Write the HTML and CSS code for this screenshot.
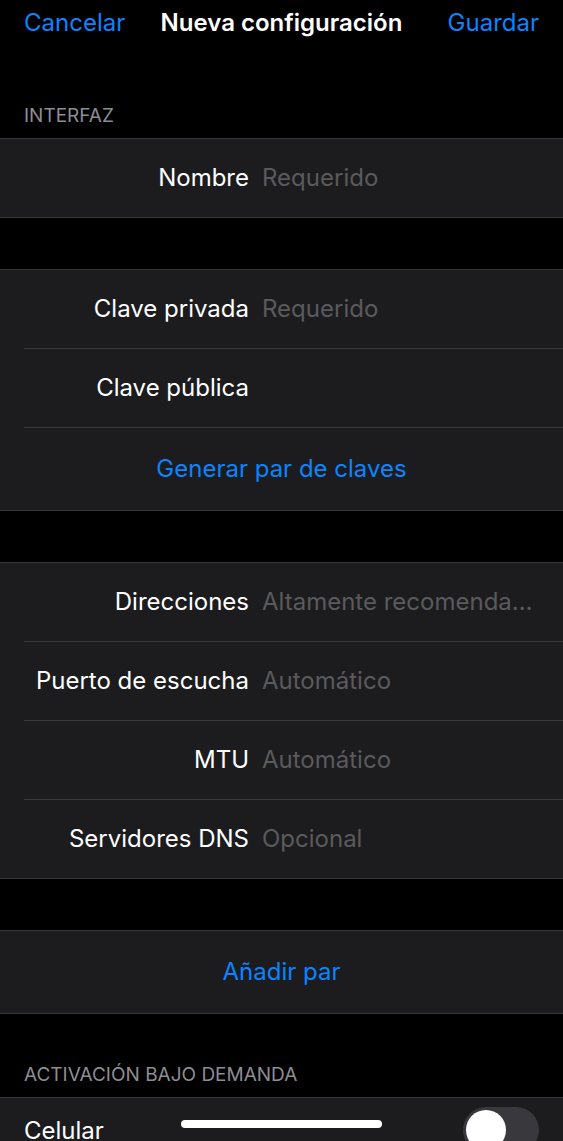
FILE: index.html
```html
<!DOCTYPE html>
<html lang="es">
<head>
	<meta charset="utf-8" />
	<title>Nueva configuración</title>
	<link rel="stylesheet" href="styles.css">
</head>
<body>
	<div class="screen">
		<header class="navbar">
			<span class="nav-button nav-left">Cancelar</span>
			<span class="nav-title">Nueva configuración</span>
			<span class="nav-button nav-right">Guardar</span>
		</header>

		<div class="section-header first">INTERFAZ</div>
		<div class="group">
			<div class="row field">
				<span class="label">Nombre</span>
				<span class="value placeholder">Requerido</span>
			</div>
		</div>

		<div class="group spaced">
			<div class="row field">
				<span class="label">Clave privada</span>
				<span class="value placeholder">Requerido</span>
			</div>
			<div class="row field">
				<span class="label">Clave pública</span>
				<span class="value"></span>
			</div>
			<div class="row action">Generar par de claves</div>
		</div>

		<div class="group spaced">
			<div class="row field">
				<span class="label">Direcciones</span>
				<span class="value placeholder">Altamente recomendado</span>
			</div>
			<div class="row field">
				<span class="label">Puerto de escucha</span>
				<span class="value placeholder">Automático</span>
			</div>
			<div class="row field">
				<span class="label">MTU</span>
				<span class="value placeholder">Automático</span>
			</div>
			<div class="row field">
				<span class="label">Servidores DNS</span>
				<span class="value placeholder">Opcional</span>
			</div>
		</div>

		<div class="group spaced">
			<div class="row action">Añadir par</div>
		</div>

		<div class="section-header">ACTIVACIÓN BAJO DEMANDA</div>
		<div class="group">
			<div class="row switch-row">
				<span class="switch-label">Celular</span>
				<span class="switch"><span class="knob"></span></span>
			</div>
		</div>
	</div>
	<div class="home-indicator"></div>
</body>
</html>
```

FILE: styles.css
```css
html, body {
	margin: 0;
	height: 100%;
	overflow: hidden;
	background-color: #000;
}

body {
	font-family: Inter, "Noto Sans", sans-serif;
	font-size: 24px;
	color: #fff;
}

.screen {
	display: flex;
	flex-direction: column;
}

.navbar {
	display: grid;
	grid-template-columns: 1fr auto 1fr;
	align-items: center;
	height: 44px;
	padding: 0 24px;
}

.nav-button {
	color: #0a84ff;
}

.nav-left {
	justify-self: start;
}

.nav-right {
	justify-self: end;
}

.nav-title {
	font-weight: 600;
}

.section-header {
	padding: 50px 24px 11px;
	font-size: 19px;
	line-height: 22px;
	color: #8d8d93;
}

.section-header.first {
	padding-top: 61px;
}

.group {
	background-color: #1c1c1e;
	border-top: 1px solid #38383a;
	border-bottom: 1px solid #38383a;
}

.group.spaced {
	margin-top: 51px;
}

.row {
	display: flex;
	align-items: center;
	height: 76px;
	padding-bottom: 2px;
	margin-left: 24px;
	padding-right: 24px;
}

.row + .row {
	border-top: 1px solid #38383a;
}

.label {
	flex: 0 0 225px;
	text-align: right;
	white-space: nowrap;
}

.value {
	flex: 1;
	min-width: 0;
	margin-left: 13px;
	white-space: nowrap;
	overflow: hidden;
	text-overflow: ellipsis;
}

.placeholder {
	color: #5a5a5d;
}

.action {
	height: 80px;
	justify-content: center;
	color: #0a84ff;
}

.switch-row {
	height: 64px;
	padding-bottom: 0;
	justify-content: space-between;
}

.switch {
	display: flex;
	align-items: center;
	width: 76px;
	height: 46px;
	padding: 0 3px;
	box-sizing: border-box;
	border-radius: 23px;
	background-color: #39393d;
}

.knob {
	width: 40px;
	height: 40px;
	border-radius: 50%;
	background-color: #fff;
}

.home-indicator {
	position: fixed;
	left: 181px;
	bottom: 13px;
	width: 201px;
	height: 8px;
	border-radius: 4px;
	background-color: #fff;
}
```
